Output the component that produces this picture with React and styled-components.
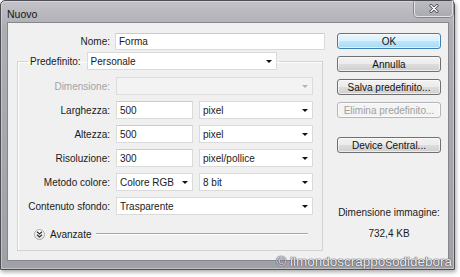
import React from "react";
import styled, { createGlobalStyle } from "styled-components";

const GlobalStyle = createGlobalStyle`
  html, body {
    margin: 0;
    padding: 0;
    background: #fff;
  }
  body {
    font-family: "Liberation Sans", Arial, sans-serif;
    font-size: 10px;
    color: #1a1a1a;
  }
  #root {
    width: 460px;
    height: 277px;
    overflow: hidden;
  }
`;

const Window = styled.div`
  position: relative;
  box-sizing: border-box;
  width: 455px;
  height: 270px;
  display: flex;
  flex-direction: column;
  border: 1px solid #4e4e55;
  border-radius: 5px 5px 0 0;
  background: linear-gradient(180deg, #c2c2c8 0%, #adadb4 10%, #a0a0a7 100%);
  box-shadow: 1px 2px 4px rgba(0, 0, 0, 0.35), inset 0 0 0 1px rgba(255, 255, 255, 0.35);
`;

const TitleBar = styled.div`
  height: 21px;
  display: flex;
  justify-content: space-between;
  align-items: flex-start;
`;

const Title = styled.span`
  padding: 7px 0 0 6px;
  font-size: 10.5px;
  color: #161616;
`;

const CloseButton = styled.div`
  box-sizing: border-box;
  width: 39px;
  height: 16px;
  margin-right: 1px;
  border: 1px solid rgba(255, 255, 255, 0.6);
  border-top: none;
  border-radius: 0 0 4px 4px;
  background: linear-gradient(180deg, #bcbcc2, #aaaab1);
  box-shadow: 0 0 0 1px rgba(70, 70, 80, 0.45);
  display: flex;
  align-items: center;
  justify-content: center;
`;

const Client = styled.div`
  flex: 1;
  display: flex;
  box-sizing: border-box;
  margin: 0 5px 8px 6px;
  padding-top: 10px;
  border: 1px solid #86868c;
  background: #f0f0f0;
`;

const LeftPane = styled.div`
  width: 317px;
  display: flex;
  flex-direction: column;
`;

const NameRow = styled.div`
  display: grid;
  grid-template-columns: 102px 210px;
  column-gap: 5px;
  align-items: center;
`;

const Label = styled.span`
  text-align: right;
  white-space: nowrap;
  color: ${p => (p.$disabled ? "#a3a3a3" : "#1a1a1a")};
`;

const Field = styled.div`
  box-sizing: border-box;
  height: ${p => p.$h || 18}px;
  display: flex;
  align-items: center;
  padding-left: 3px;
  background: #fff;
  border: 1px solid #dadada;
  border-top-color: #cbcbcb;
  white-space: nowrap;
`;

const SelectBox = styled(Field)`
  position: relative;
  width: ${p => (p.$w ? p.$w + "px" : "auto")};
  background: ${p => (p.$disabled ? "#f3f3f3" : "#fff")};
  border-color: ${p => (p.$disabled ? "#dcdcdc" : "#dadada")};
  grid-column: ${p => (p.$span ? "span 2" : "auto")};

  &::after {
    content: "";
    position: absolute;
    right: 4px;
    top: 7px;
    border-left: 3px solid transparent;
    border-right: 3px solid transparent;
    border-top: 3px solid ${p => (p.$disabled ? "#b4b4b4" : "#111")};
  }
`;

const Select = ({ children, ...rest }) => <SelectBox {...rest}>{children}</SelectBox>;

const Group = styled.fieldset`
  box-sizing: border-box;
  width: 306px;
  min-width: 0;
  margin: 2px 0 0 9px;
  padding: 7px 0 9px 0;
  border: 1px solid #d3d3d3;
  box-shadow: inset 1px 1px 0 #fff;
`;

const Legend = styled.legend`
  display: flex;
  align-items: center;
  gap: 6px;
  margin-left: 10px;
  padding: 0 2px;
`;

const Rows = styled.div`
  display: grid;
  grid-template-columns: 92px 77px 114px;
  grid-auto-rows: 18px;
  column-gap: 6px;
  row-gap: 6px;
  align-items: center;
`;

const AdvancedRow = styled.div`
  display: flex;
  align-items: center;
  height: 14px;
  margin-top: 12px;
  padding-left: 16px;
`;

const RoundToggle = styled.span`
  box-sizing: border-box;
  width: 11px;
  height: 11px;
  border-radius: 50%;
  border: 1px solid #a9a9a9;
  background: linear-gradient(180deg, #ffffff, #e4e4e4);
  display: flex;
  align-items: center;
  justify-content: center;
  margin-right: 5px;
`;

const Rule = styled.span`
  flex: 1;
  height: 0;
  margin: 0 14px 0 4px;
  border-top: 1px solid #a6a6a6;
  border-bottom: 1px solid #fff;
`;

const RightPane = styled.div`
  width: 104px;
  margin-left: 12px;
  display: flex;
  flex-direction: column;
  gap: 7px;
`;

const Button = styled.div`
  box-sizing: border-box;
  height: 16px;
  display: flex;
  align-items: center;
  justify-content: center;
  border-radius: 3px;
  white-space: nowrap;
  margin-top: ${p => p.$gapTop || 0}px;
  border: 1px solid ${p => (p.$primary ? "#3c7fb1" : p.$disabled ? "#b3b6b8" : "#707070")};
  color: ${p => (p.$disabled ? "#a0a0a0" : "#111")};
  background: ${p =>
    p.$primary
      ? "linear-gradient(180deg, #eaf6fd 0%, #d9f0fc 50%, #bee6fd 51%, #a7d9f5 100%)"
      : p.$disabled
      ? "#f4f4f4"
      : "linear-gradient(180deg, #f2f2f2 0%, #ebebeb 50%, #dddddd 51%, #cfcfcf 100%)"};
  box-shadow: inset 0 0 0 1px rgba(255, 255, 255, 0.6);
`;

const Info = styled.div`
  margin-top: ${p => p.$top}px;
  text-align: center;
  line-height: 12px;
  white-space: nowrap;
`;

const Watermark = styled.span`
  position: absolute;
  right: 2px;
  bottom: 0;
  font-size: 13.5px;
  line-height: 15px;
  color: #ececf0;
  text-shadow: 0 0 1px #55555b, 0 0 1px #55555b, 0 0 1px #55555b;
  white-space: nowrap;
`;

const CloseIcon = () => (
  <svg width="10" height="9" viewBox="0 0 10 9">
    <path d="M2 1.5 L8 7.5 M8 1.5 L2 7.5" stroke="#45454c" strokeWidth="3" strokeLinecap="round" />
    <path d="M2 1.5 L8 7.5 M8 1.5 L2 7.5" stroke="#fff" strokeWidth="1.4" strokeLinecap="round" />
  </svg>
);

const ChevronsDown = () => (
  <svg width="7" height="7" viewBox="0 0 7 7">
    <path d="M1 0.8 L3.5 3 L6 0.8 M1 3.8 L3.5 6 L6 3.8" fill="none" stroke="#333" strokeWidth="1.2" />
  </svg>
);

export default function App() {
  return (
    <>
      <GlobalStyle />
      <Window>
        <TitleBar>
          <Title>Nuovo</Title>
          <CloseButton>
            <CloseIcon />
          </CloseButton>
        </TitleBar>
        <Client>
          <LeftPane>
            <NameRow>
              <Label>Nome:</Label>
              <Field $h={17}>Forma</Field>
            </NameRow>
            <Group>
              <Legend>
                <Label>Predefinito:</Label>
                <Select $w={190}>Personale</Select>
              </Legend>
              <Rows>
                <Label $disabled>Dimensione:</Label>
                <Select $span $disabled />
                <Label>Larghezza:</Label>
                <Field>500</Field>
                <Select>pixel</Select>
                <Label>Altezza:</Label>
                <Field>500</Field>
                <Select>pixel</Select>
                <Label>Risoluzione:</Label>
                <Field>300</Field>
                <Select>pixel/pollice</Select>
                <Label>Metodo colore:</Label>
                <Select>Colore RGB</Select>
                <Select>8 bit</Select>
                <Label>Contenuto sfondo:</Label>
                <Select $span>Trasparente</Select>
              </Rows>
              <AdvancedRow>
                <RoundToggle>
                  <ChevronsDown />
                </RoundToggle>
                <span>Avanzate</span>
                <Rule />
              </AdvancedRow>
            </Group>
          </LeftPane>
          <RightPane>
            <Button $primary>OK</Button>
            <Button>Annulla</Button>
            <Button>Salva predefinito...</Button>
            <Button $disabled>Elimina predefinito...</Button>
            <Button $gapTop={12}>Device Central...</Button>
            <Info $top={47}>Dimensione immagine:</Info>
            <Info $top={2}>732,4 KB</Info>
          </RightPane>
        </Client>
        <Watermark>© ilmondoscrapposodidebora</Watermark>
      </Window>
    </>
  );
}
